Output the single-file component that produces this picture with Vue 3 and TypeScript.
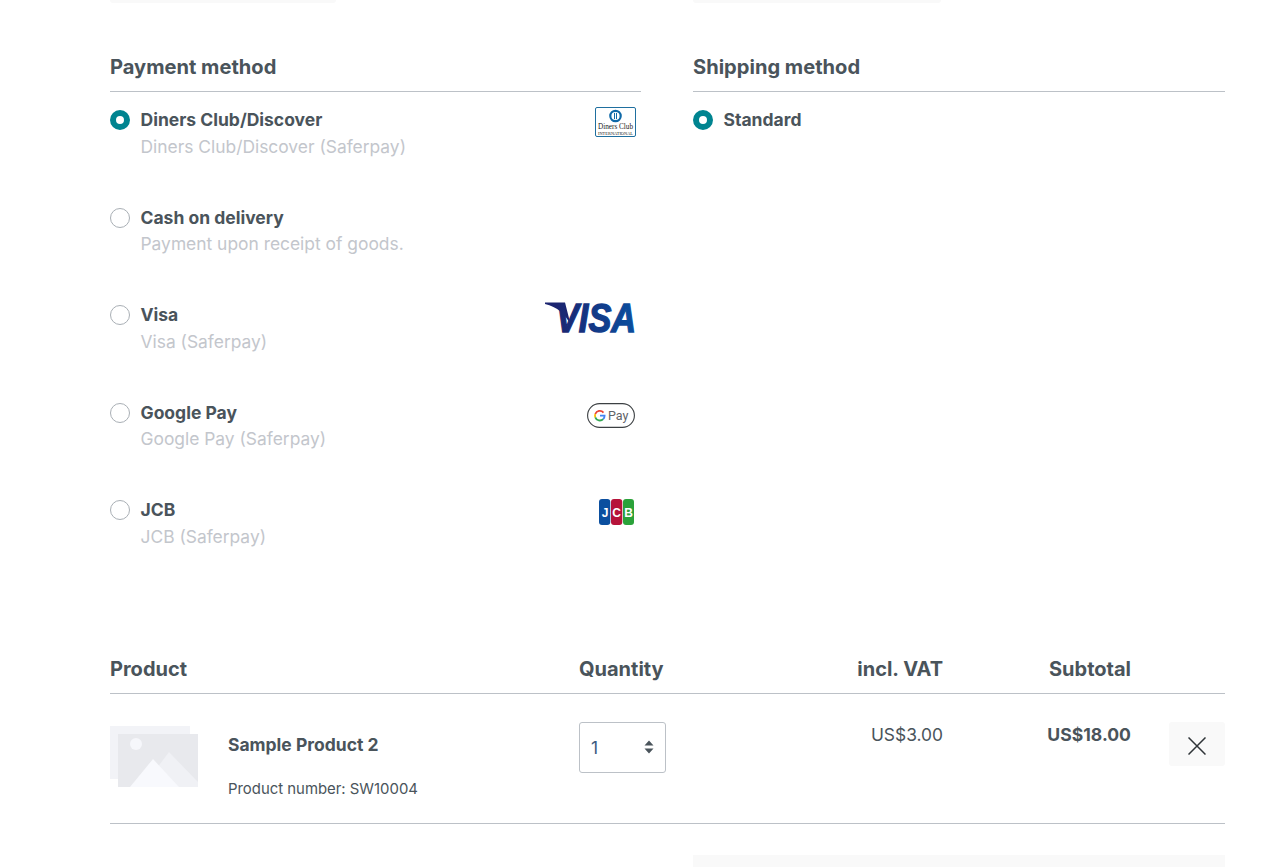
<template>
  <div class="page">
    <div class="columns top-stubs">
      <div><div class="stub stub--left"></div></div>
      <div><div class="stub stub--right"></div></div>
    </div>

    <div class="columns methods">
      <section>
        <h2 class="method-title">Payment method</h2>
        <div class="method-list">
          <div v-for="m in payments" :key="m.name" class="method">
            <span class="radio" :class="{ 'radio--on': m.checked }"></span>
            <div class="method-text">
              <div class="method-name">{{ m.name }}</div>
              <div class="method-desc">{{ m.desc }}</div>
            </div>
            <div class="method-logo" :class="m.logo ? `logo--${m.logo}` : ''">
              <svg v-if="m.logo === 'diners'" width="41" height="30" viewBox="0 0 41 30">
                <rect x="0.5" y="0.5" width="40" height="29" rx="1.5" fill="#fff" stroke="#1f6f9f" />
                <circle cx="20.5" cy="9" r="5.2" fill="none" stroke="#0f69a8" stroke-width="2.2" />
                <rect x="19" y="6" width="1" height="6" fill="#0f69a8" />
                <rect x="21" y="6" width="1" height="6" fill="#0f69a8" />
                <text x="3" y="22" class="diners-name" textLength="35" lengthAdjust="spacingAndGlyphs">Diners Club</text>
                <text x="3" y="27.5" class="diners-sub" textLength="35" lengthAdjust="spacingAndGlyphs">INTERNATIONAL</text>
              </svg>
              <svg v-else-if="m.logo === 'visa'" width="110" height="46" viewBox="0 0 110 46">
                <defs>
                  <linearGradient id="visaBlue" x1="0" y1="0" x2="1" y2="0">
                    <stop offset="0" stop-color="#1b2470" />
                    <stop offset="1" stop-color="#0a4f9f" />
                  </linearGradient>
                </defs>
                <path d="M0 10.5H20L26 34Q18 16 0 12z" fill="#1b2470" />
                <text x="11" y="39.5" class="visa-text" fill="url(#visaBlue)" stroke="url(#visaBlue)" stroke-width="1.4" textLength="80" lengthAdjust="spacingAndGlyphs">VISA</text>
              </svg>
              <svg v-else-if="m.logo === 'gpay'" width="48" height="25" viewBox="0 0 48 25">
                <rect x="0.6" y="0.6" width="46.8" height="23.8" rx="11.9" fill="#fff" stroke="#3c4043" stroke-width="1.1" />
                <path d="M16.48 9.61A4.8 4.8 0 0 0 8.29 11.06" fill="none" stroke="#ea4335" stroke-width="1.8" />
                <path d="M8.29 11.06A4.8 4.8 0 0 0 8.29 14.34" fill="none" stroke="#fbbc04" stroke-width="1.8" />
                <path d="M8.29 14.34A4.8 4.8 0 0 0 16.2 16.1" fill="none" stroke="#34a853" stroke-width="1.8" />
                <path d="M16.2 16.1A4.8 4.8 0 0 0 17.6 12.7H13" fill="none" stroke="#4285f4" stroke-width="1.8" />
                <text x="21" y="16.5" class="gpay-text">Pay</text>
              </svg>
              <svg v-else-if="m.logo === 'jcb'" width="35" height="26" viewBox="0 0 35 26">
                <rect x="0" y="0" width="11.3" height="26" rx="3" fill="#0b4f9f" />
                <rect x="12" y="0" width="11.3" height="26" rx="3" fill="#b6133a" />
                <rect x="24" y="0" width="11" height="26" rx="3" fill="#2ba23a" />
                <text x="6" y="18" text-anchor="middle" class="jcb-text">J</text>
                <text x="17.6" y="18" text-anchor="middle" class="jcb-text">C</text>
                <text x="29.5" y="18" text-anchor="middle" class="jcb-text">B</text>
              </svg>
            </div>
          </div>
        </div>
      </section>

      <section>
        <h2 class="method-title">Shipping method</h2>
        <div class="method-list">
          <div class="method">
            <span class="radio radio--on"></span>
            <div class="method-text">
              <div class="method-name">Standard</div>
            </div>
          </div>
        </div>
      </section>
    </div>

    <div class="cart">
      <div class="cart-row cart-head">
        <div>Product</div>
        <div>Quantity</div>
        <div class="right">incl. VAT</div>
        <div class="right">Subtotal</div>
        <div></div>
      </div>
      <div class="cart-row cart-item">
        <div class="product">
          <svg class="thumb" width="88" height="61" viewBox="0 0 88 61">
            <rect x="0" y="0" width="80" height="53" fill="#f2f3f7" />
            <rect x="8" y="8" width="80" height="53" fill="#e8e9ed" />
            <circle cx="26" cy="18" r="6" fill="#f6f7fb" />
            <path d="M47 42L59 26L88 56V61H67z" fill="#f0f1f5" />
            <path d="M20 61L43 33L69 61z" fill="#f8f9fd" />
          </svg>
          <div class="product-info">
            <div class="product-name">Sample Product 2</div>
            <div class="product-number">Product number: SW10004</div>
          </div>
        </div>
        <div>
          <div class="qty">
            <span>1</span>
            <svg width="10" height="14" viewBox="0 0 10 14">
              <path d="M5 0.5l4.5 5h-9zM5 13.5l-4.5-5h9z" fill="#4a545b" />
            </svg>
          </div>
        </div>
        <div class="right unit-price">US$3.00</div>
        <div class="right subtotal">US$18.00</div>
        <div class="remove-cell">
          <button class="remove" type="button" aria-label="Remove">
            <svg width="18" height="18" viewBox="0 0 18 18">
              <path d="M0.5 0.5l17 17M17.5 0.5l-17 17" stroke="#2f3438" stroke-width="1.5" fill="none" />
            </svg>
          </button>
        </div>
      </div>
    </div>

    <div class="columns bottom-stub">
      <div></div>
      <div class="stub stub--summary"></div>
    </div>
  </div>
</template>

<script setup lang="ts">
interface Payment {
  name: string;
  desc: string;
  logo?: string;
  checked?: boolean;
}

const payments: Payment[] = [
  { name: "Diners Club/Discover", desc: "Diners Club/Discover (Saferpay)", logo: "diners", checked: true },
  { name: "Cash on delivery", desc: "Payment upon receipt of goods." },
  { name: "Visa", desc: "Visa (Saferpay)", logo: "visa" },
  { name: "Google Pay", desc: "Google Pay (Saferpay)", logo: "gpay" },
  { name: "JCB", desc: "JCB (Saferpay)", logo: "jcb" },
];
</script>

<style>
html,
body {
  margin: 0;
  background: #fff;
}
</style>

<style scoped>
.page {
  height: 867px;
  overflow: hidden;
  padding: 0 52px 0 110px;
  font-family: Inter, "Liberation Sans", sans-serif;
  color: #4a545b;
}

.columns {
  display: grid;
  grid-template-columns: 531px 532px;
  column-gap: 52px;
}

.stub {
  background: #f9f9f9;
}

.stub--left {
  width: 226px;
  height: 3px;
  border-radius: 0 0 3px 3px;
}

.stub--right {
  width: 248px;
  height: 3px;
  border-radius: 0 0 3px 3px;
}

.methods {
  margin-top: 52px;
}

.method-title {
  margin: 0;
  height: 36px;
  line-height: 24px;
  font-size: 20.1px;
  font-weight: 700;
  border-bottom: 1px solid #bcc1c7;
}

.method-list {
  padding-top: 18px;
}

.method {
  display: flex;
  height: 97.5px;
}

.radio {
  flex: none;
  box-sizing: border-box;
  width: 20px;
  height: 20px;
  border-radius: 50%;
  border: 1px solid #a9afb5;
  background: #fff;
  margin-right: 10.5px;
}

.radio--on {
  border: 6px solid #008490;
}

.method-text {
  flex: 1;
}

.method-name {
  font-size: 17.5px;
  font-weight: 700;
  line-height: 20px;
}

.method-desc {
  margin-top: 6.9px;
  font-size: 17.4px;
  line-height: 20px;
  color: #c3c6cc;
}

.method-logo {
  display: flex;
  justify-content: flex-end;
  align-items: flex-start;
}

.logo--diners {
  margin: -3px 5px 0 0;
}

.logo--visa {
  margin: -13px -14px 0 0;
}

.logo--gpay {
  margin: 0 6.5px 0 0;
}

.logo--jcb {
  margin: -1px 7px 0 0;
}

.diners-name {
  font-family: "Liberation Serif", serif;
  font-size: 8px;
  fill: #222;
}

.diners-sub {
  font-family: "Liberation Serif", serif;
  font-size: 3.6px;
  fill: #222;
}

.visa-text {
  font-family: "Liberation Sans", sans-serif;
  font-size: 40px;
  font-weight: 700;
  font-style: italic;
}

.gpay-text {
  font-family: Roboto, sans-serif;
  font-size: 12.5px;
  fill: #5f6368;
}

.jcb-text {
  font-family: "Liberation Sans", sans-serif;
  font-size: 12px;
  font-weight: 700;
  fill: #fff;
}

.cart {
  margin-top: 59px;
}

.cart-row {
  display: grid;
  grid-template-columns: 469px 100px 264px 188px 94px;
  border-bottom: 1px solid #bcc1c7;
}

.cart-head {
  height: 36px;
  line-height: 24px;
  font-size: 20px;
  font-weight: 700;
}

.right {
  text-align: right;
}

.cart-item {
  height: 130px;
  padding-top: 28px;
  box-sizing: border-box;
  font-size: 17.4px;
}

.product {
  display: flex;
  margin-top: 4px;
}

.thumb {
  flex: none;
  margin-right: 30px;
}

.product-name {
  font-weight: 700;
  font-size: 17.5px;
  line-height: 20px;
  margin-top: 9px;
}

.product-number {
  font-size: 14.9px;
  line-height: 18px;
  margin-top: 25px;
}

.qty {
  box-sizing: border-box;
  width: 87px;
  height: 51px;
  border: 1px solid #bcc1c7;
  border-radius: 3px;
  display: flex;
  align-items: center;
  justify-content: space-between;
  padding: 0 11px;
  color: #3d5a80;
}

.unit-price,
.subtotal {
  line-height: 24px;
  padding-top: 1px;
}

.subtotal {
  font-size: 17.6px;
  font-weight: 700;
}

.remove-cell {
  display: flex;
  justify-content: flex-end;
}

.remove {
  width: 56px;
  height: 44px;
  border: 0;
  border-radius: 3px;
  background: #f9f9f9;
  display: flex;
  align-items: center;
  justify-content: center;
  padding: 4px 0 0;
  box-sizing: border-box;
}

.bottom-stub {
  margin-top: 31px;
}

.stub--summary {
  height: 12px;
}
</style>
